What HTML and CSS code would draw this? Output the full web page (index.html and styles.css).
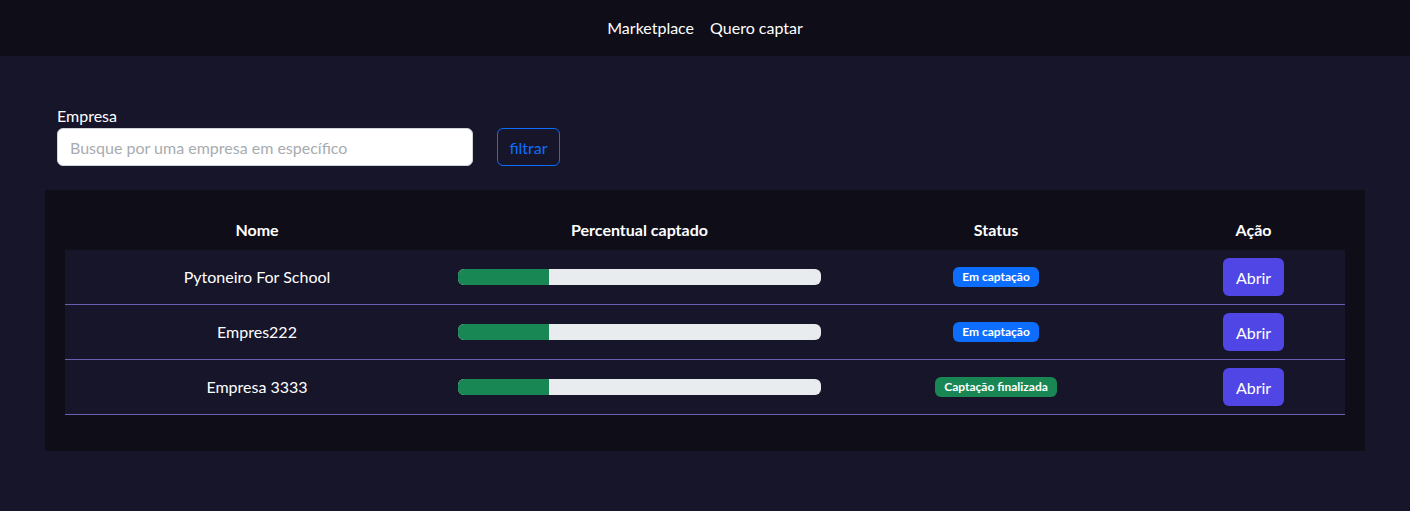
FILE: index.html
```html
<!DOCTYPE html>
<html lang="pt-BR">
<head>
<meta charset="utf-8">
<title>Marketplace</title>
<link rel="stylesheet" href="styles.css">
</head>
<body>
<nav class="navbar">
  <a class="nav-link" href="#">Marketplace</a>
  <a class="nav-link" href="#">Quero captar</a>
</nav>
<main class="container">
  <form class="filter">
    <div class="field">
      <label class="label" for="empresa">Empresa</label>
      <input class="input" id="empresa" type="text" placeholder="Busque por uma empresa em específico">
    </div>
    <button class="btn-outline" type="button">filtrar</button>
  </form>
  <section class="card">
    <div class="table">
      <div class="row head">
        <div class="cell">Nome</div>
        <div class="cell">Percentual captado</div>
        <div class="cell">Status</div>
        <div class="cell">Ação</div>
      </div>
      <div class="row body">
        <div class="cell">Pytoneiro For School</div>
        <div class="cell"><div class="progress"><div class="bar" style="width:25%"></div></div></div>
        <div class="cell"><span class="badge blue">Em captação</span></div>
        <div class="cell"><button class="btn-primary" type="button">Abrir</button></div>
      </div>
      <div class="row body">
        <div class="cell">Empres222</div>
        <div class="cell"><div class="progress"><div class="bar" style="width:25%"></div></div></div>
        <div class="cell"><span class="badge blue">Em captação</span></div>
        <div class="cell"><button class="btn-primary" type="button">Abrir</button></div>
      </div>
      <div class="row body">
        <div class="cell">Empresa 3333</div>
        <div class="cell"><div class="progress"><div class="bar" style="width:25%"></div></div></div>
        <div class="cell"><span class="badge green">Captação finalizada</span></div>
        <div class="cell"><button class="btn-primary" type="button">Abrir</button></div>
      </div>
    </div>
  </section>
</main>
</body>
</html>
```

FILE: styles.css
```css
* { box-sizing: border-box; }
html, body { height: 100%; }
body {
  margin: 0;
  background: #17152a;
  color: #ffffff;
  font-family: Lato, "Noto Sans", "Liberation Sans", sans-serif;
  font-size: 16px;
  line-height: 24px;
}
.navbar {
  height: 56px;
  background: #0e0d18;
  display: flex;
  justify-content: center;
  align-items: center;
  gap: 16px;
}
.nav-link {
  color: #ffffff;
  text-decoration: none;
}
.container {
  width: 1320px;
  margin: 48px auto 0;
}
.filter {
  display: flex;
  align-items: flex-end;
  gap: 24px;
  padding: 0 12px;
  margin: 0 0 24px;
}
.field {
  display: flex;
  flex-direction: column;
  width: 416px;
}
.label {
  font-size: 16px;
  line-height: 24px;
}
.input {
  height: 38px;
  border: 1px solid #ced4da;
  border-radius: 6px;
  background: #fff;
  padding: 6px 12px;
  font-family: inherit;
  font-size: 16px;
  color: #212529;
}
.input::placeholder { color: #a7acb1; }
.btn-outline {
  height: 38px;
  width: 63px;
  padding: 6px 0;
  background: transparent;
  border: 1px solid #0d6efd;
  border-radius: 6px;
  color: #0d6efd;
  font-family: inherit;
  font-size: 16px;
}
.card {
  background: #0e0d18;
  padding: 20px;
}
.table {
  margin-bottom: 16px;
}
.row {
  display: grid;
  grid-template-columns: 384px 381px 332px 183px;
  align-items: center;
}
.cell {
  text-align: center;
  padding: 8px 9px;
  display: flex;
  justify-content: center;
  align-items: center;
}
.head { height: 40px; font-weight: 700; }
.body {
  height: 55px;
  background: #17152a;
  border-bottom: 1px solid #6a5fb0;
}
.progress {
  width: 100%;
  height: 16px;
  background: #e9ecef;
  border-radius: 6px;
  overflow: hidden;
  display: flex;
}
.bar { background: #198754; height: 100%; }
.badge {
  display: inline-block;
  padding: 4px 9px;
  font-size: 12px;
  line-height: 12px;
  font-weight: 700;
  border-radius: 6px;
  color: #fff;
}
.badge.blue { background: #0d6efd; }
.badge.green { background: #198754; }
.btn-primary {
  height: 38px;
  width: 61px;
  padding: 6px 0;
  background: #5046e5;
  border: 0;
  border-radius: 6px;
  color: #fff;
  font-family: inherit;
  font-size: 16px;
}
```
